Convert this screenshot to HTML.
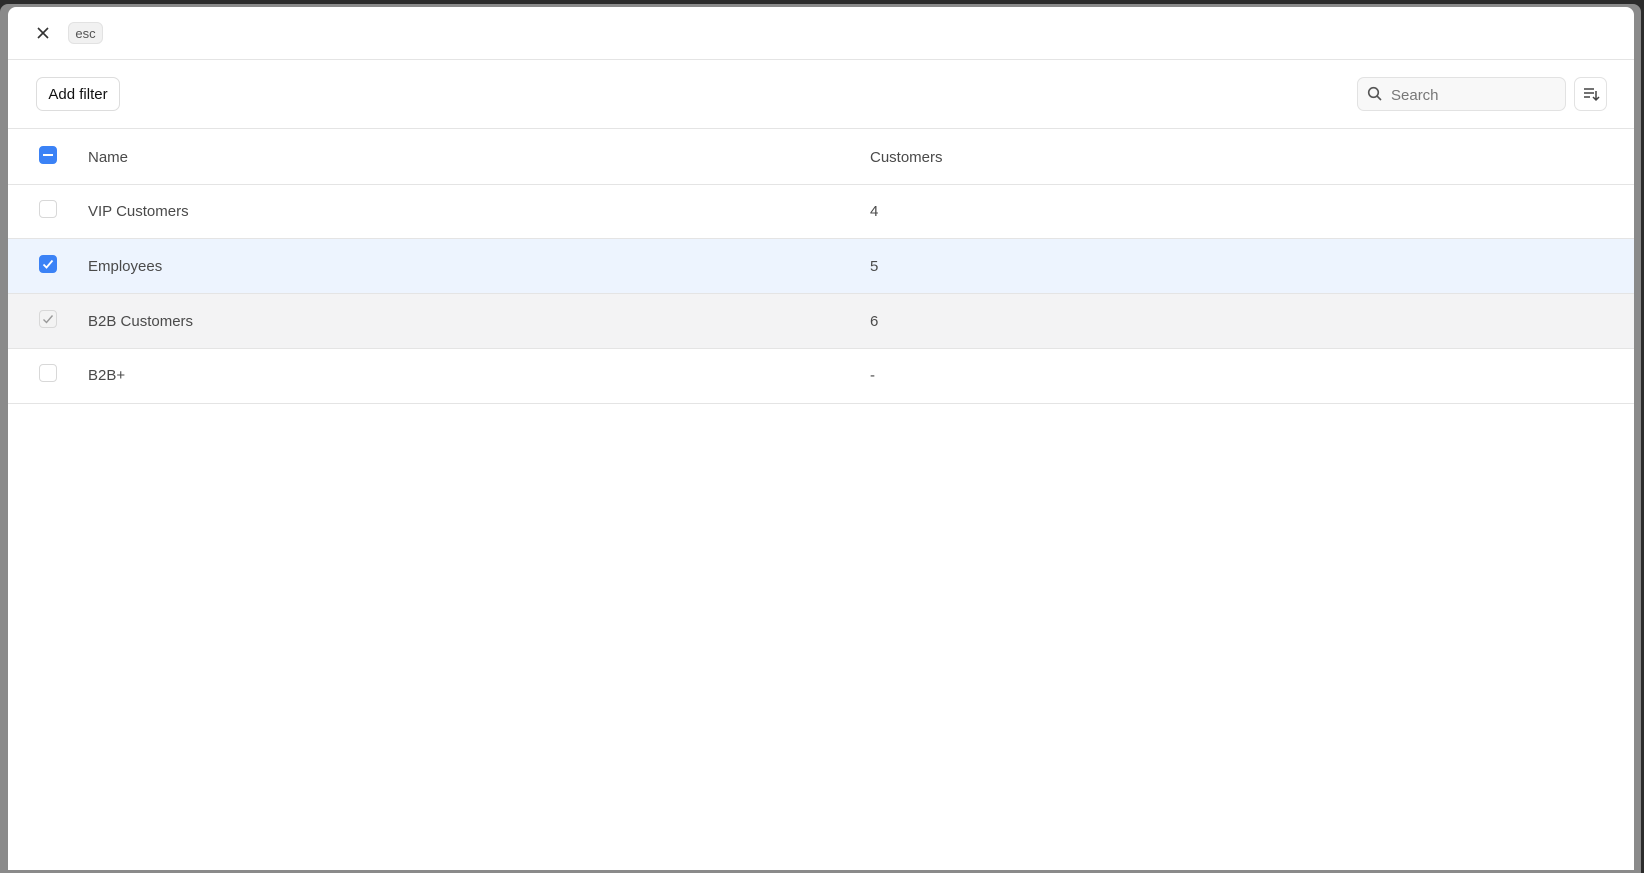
<!DOCTYPE html>
<html><head><style>
*{box-sizing:border-box;margin:0;padding:0}
body{width:1644px;height:873px;background:#2b2b2b;font-family:"Liberation Sans",sans-serif;overflow:hidden;position:relative}
.frame{position:absolute;left:0;top:4px;width:1641px;height:869px;background:#8a8a8a;border-radius:8px 8px 0 0}
.panel{position:absolute;left:8px;top:7px;width:1626px;height:863px;background:#fff;border-radius:8px 8px 0 0;overflow:hidden}
.abs{position:absolute}
.line{position:absolute;left:0;right:0;height:1px;background:#e4e4e4}
.txt{position:absolute;font-size:15px;color:#4a4a4a}
.cb{position:absolute;left:31px;width:18px;height:18px;border:1px solid #d8d8d8;border-radius:4px;background:#fff}
</style></head><body>
<div class="frame"></div>
<div class="panel">
 <svg class="abs" style="left:28px;top:19px" width="14" height="14" viewBox="0 0 14 14"><path d="M2 2L12 12M12 2L2 12" stroke="#333" stroke-width="1.6"/></svg>
 <div class="abs" style="left:60px;top:15px;width:35px;height:22px;background:#f1f1f1;border:1px solid #e2e2e2;border-radius:6px;font-size:13px;color:#555;text-align:center;line-height:21px">esc</div>
 <div class="line" style="top:52px"></div>
 <div class="abs" style="left:28px;top:70px;width:84px;height:34px;border:1px solid #ddd;border-radius:7px;font-size:15px;color:#111;text-align:center;line-height:33px">Add filter</div>
 <div class="abs" style="left:1349px;top:70px;width:209px;height:34px;border:1px solid #e2e2e2;border-radius:7px;background:#f8f8f8"></div>
 <svg class="abs" style="left:1359px;top:79px" width="16" height="16" viewBox="0 0 16 16"><circle cx="6.5" cy="6.5" r="4.8" fill="none" stroke="#555" stroke-width="1.6"/><path d="M10 10L14 14" stroke="#555" stroke-width="1.6"/></svg>
 <div class="txt" style="left:1383px;top:80px;color:#777">Search</div>
 <div class="abs" style="left:1566px;top:70px;width:33px;height:34px;border:1px solid #e2e2e2;border-radius:7px"></div>
 <svg class="abs" style="left:1574px;top:79px" width="18" height="16" viewBox="0 0 18 16"><path d="M2 3H12M2 7H12M2 11H8M14 5V14M11 11L14 14L17 11" stroke="#444" stroke-width="1.5" fill="none"/></svg>
 <div class="line" style="top:121px"></div>
 <div class="cb" style="top:139px;background:#3b82f6;border-color:#3b82f6"><div style="position:absolute;left:3px;top:7px;width:10px;height:2px;background:#fff"></div></div>
 <div class="txt" style="left:80px;top:142px">Name</div>
 <div class="txt" style="left:862px;top:142px">Customers</div>
 <div class="line" style="top:177px"></div>
 <div class="cb" style="top:193px"></div>
 <div class="txt" style="left:80px;top:196px">VIP Customers</div>
 <div class="txt" style="left:862px;top:196px">4</div>
 <div class="line" style="top:231px"></div>
 <div class="abs" style="left:0;right:0;top:232px;height:54px;background:#edf4fe"></div>
 <div class="cb" style="top:248px;background:#3b82f6;border-color:#3b82f6"><svg width="16" height="16" viewBox="0 0 16 16" style="position:absolute;left:0;top:0"><path d="M3.5 8.5L6.5 11.5L12.5 4.5" stroke="#fff" stroke-width="1.8" fill="none"/></svg></div>
 <div class="txt" style="left:80px;top:251px">Employees</div>
 <div class="txt" style="left:862px;top:251px">5</div>
 <div class="line" style="top:286px"></div>
 <div class="abs" style="left:0;right:0;top:287px;height:54px;background:#f3f3f4"></div>
 <div class="cb" style="top:303px;background:#f3f3f3"><svg width="16" height="16" viewBox="0 0 16 16" style="position:absolute;left:0;top:0"><path d="M3.5 8.5L6.5 11.5L12.5 4.5" stroke="#999" stroke-width="1.4" fill="none"/></svg></div>
 <div class="txt" style="left:80px;top:306px">B2B Customers</div>
 <div class="txt" style="left:862px;top:306px">6</div>
 <div class="line" style="top:341px"></div>
 <div class="cb" style="top:357px"></div>
 <div class="txt" style="left:80px;top:360px">B2B+</div>
 <div class="txt" style="left:862px;top:360px">-</div>
 <div class="line" style="top:396px"></div>
</div>
</body></html>
